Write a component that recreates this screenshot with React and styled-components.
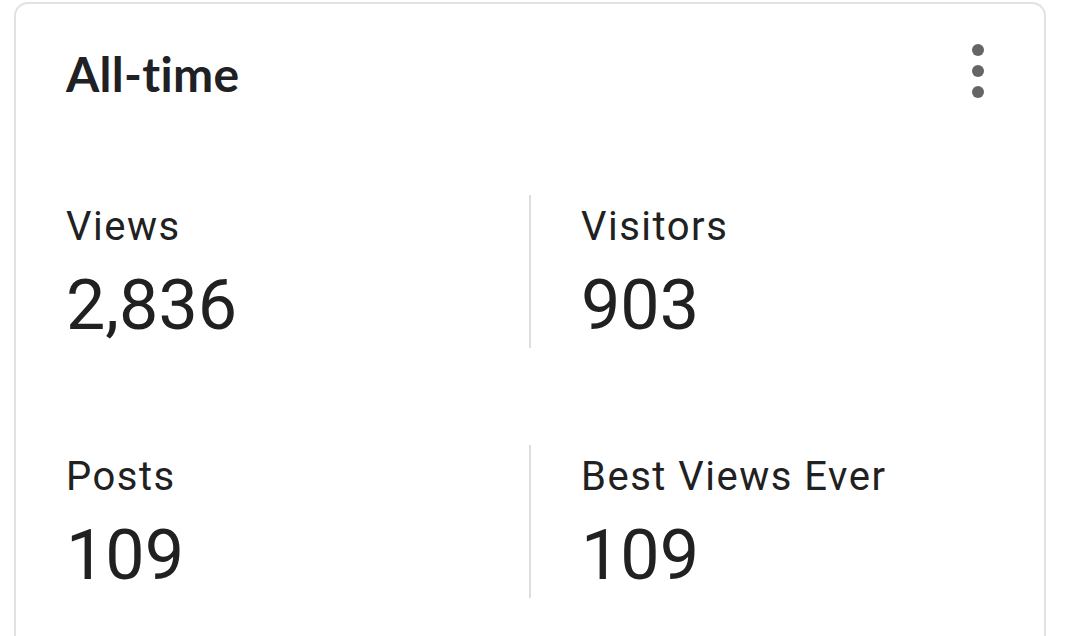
import React from 'react';
import styled, { createGlobalStyle } from 'styled-components';

const GlobalStyle = createGlobalStyle`
  body {
    margin: 0;
    background: #ffffff;
  }
`;

const stats = [
  { label: 'Views', value: '2,836' },
  { label: 'Visitors', value: '903' },
  { label: 'Posts', value: '109' },
  { label: 'Best Views Ever', value: '109' },
];

const MoreIcon = () => (
  <svg width="14" height="56" viewBox="0 0 14 56" aria-hidden="true">
    <circle cx="7" cy="7" r="6" fill="#656565" />
    <circle cx="7" cy="28" r="6" fill="#656565" />
    <circle cx="7" cy="49" r="6" fill="#656565" />
  </svg>
);

const App = () => {
  return (
    <>
      <GlobalStyle />
      <Card>
        <Header>
          <Title>All-time</Title>
          <MenuButton aria-label="More options">
            <MoreIcon />
          </MenuButton>
        </Header>

        <StatsGrid>
          {stats.map((stat, i) => (
            <Stat key={stat.label} divided={i % 2 === 1}>
              <Label>{stat.label}</Label>
              <Value>{stat.value}</Value>
            </Stat>
          ))}
        </StatsGrid>
      </Card>
    </>
  );
};

export default App;

const Card = styled.div`
  margin: 2px 0 0 14px;
  width: 1032px;
  height: 634px;
  box-sizing: border-box;
  border: 2px solid #e2e2e2;
  border-bottom: none;
  border-radius: 14px 14px 0 0;
  background: #fff;
  padding: 41px 0 0 0;
`;

const Header = styled.div`
  display: flex;
  align-items: flex-start;
  justify-content: space-between;
  padding: 0 59px 0 50px;
  height: 56px;
`;

const Title = styled.h1`
  margin: 1px 0 0 0;
  font-family: 'Lato', 'Roboto', sans-serif;
  font-weight: 700;
  font-size: 48px;
  line-height: 56px;
  color: #202124;
  letter-spacing: 0.3px;
`;

const MenuButton = styled.button`
  border: none;
  background: none;
  padding: 0;
  margin: -2px 0 0 0;
  display: flex;
  cursor: pointer;
`;

const StatsGrid = styled.div`
  display: grid;
  grid-template-columns: 1fr 1fr;
  row-gap: 97px;
  margin-top: 94px;
`;

const Stat = styled.div`
  display: flex;
  flex-direction: column;
  gap: 15px;
  height: 153px;
  box-sizing: border-box;
  padding: 9px 0 0 50px;
  border-left: ${p => (p.divided ? '2px solid #dedede' : 'none')};
  margin-left: ${p => (p.divided ? '-1px' : '0')};
`;

const Label = styled.div`
  font-family: 'Roboto', sans-serif;
  font-size: 40px;
  line-height: 46px;
  letter-spacing: 1.5px;
  color: #212121;
`;

const Value = styled.div`
  font-family: 'Roboto', sans-serif;
  font-size: 70px;
  line-height: 80px;
  color: #212121;
`;
